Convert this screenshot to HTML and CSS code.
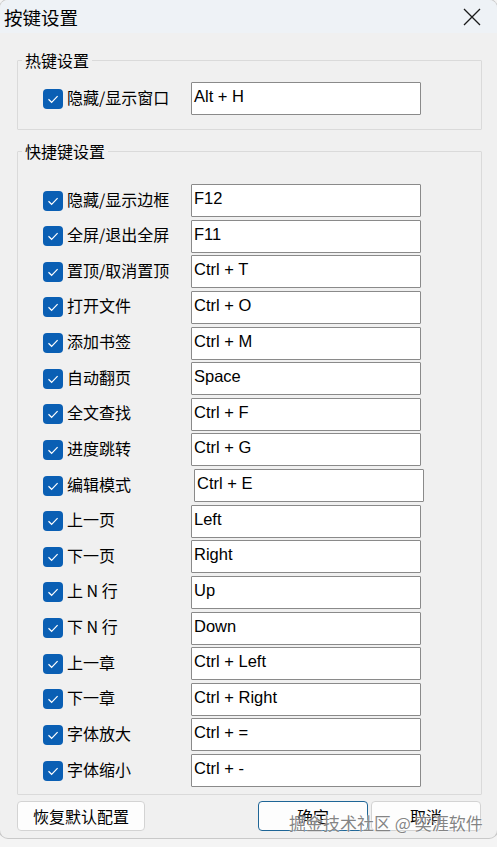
FILE: index.html
```html
<!DOCTYPE html>
<html lang="zh">
<head>
<meta charset="utf-8">
<title>按键设置</title>
<link rel="stylesheet" href="styles.css">
</head>
<body>
<div class="window">
  <div class="titlebar">
    <span class="title">按键设置</span>
    <svg class="close" width="18" height="18" viewBox="0 0 18 18"><path d="M1 1 L17 17 M17 1 L1 17" stroke="#1a1a1a" stroke-width="1.3" fill="none"/></svg>
  </div>
  <div class="content">
    <fieldset class="group group-hot">
      <legend>热键设置</legend>
      <div class="rows">
        <label class="row"><span class="chk"><svg width="20" height="20" viewBox="0 0 20 20"><path d="M5.5 10.3 L8.6 13.3 L14.6 7.2" stroke="#fff" stroke-width="1.2" fill="none"/></svg></span><span class="lbl">隐藏/显示窗口</span><span class="key">Alt + H</span></label>
      </div>
    </fieldset>
    <fieldset class="group group-short">
      <legend>快捷键设置</legend>
      <div class="rows">
        <label class="row"><span class="chk"><svg width="20" height="20" viewBox="0 0 20 20"><path d="M5.5 10.3 L8.6 13.3 L14.6 7.2" stroke="#fff" stroke-width="1.2" fill="none"/></svg></span><span class="lbl">隐藏/显示边框</span><span class="key">F12</span></label>
        <label class="row"><span class="chk"><svg width="20" height="20" viewBox="0 0 20 20"><path d="M5.5 10.3 L8.6 13.3 L14.6 7.2" stroke="#fff" stroke-width="1.2" fill="none"/></svg></span><span class="lbl">全屏/退出全屏</span><span class="key">F11</span></label>
        <label class="row"><span class="chk"><svg width="20" height="20" viewBox="0 0 20 20"><path d="M5.5 10.3 L8.6 13.3 L14.6 7.2" stroke="#fff" stroke-width="1.2" fill="none"/></svg></span><span class="lbl">置顶/取消置顶</span><span class="key">Ctrl + T</span></label>
        <label class="row"><span class="chk"><svg width="20" height="20" viewBox="0 0 20 20"><path d="M5.5 10.3 L8.6 13.3 L14.6 7.2" stroke="#fff" stroke-width="1.2" fill="none"/></svg></span><span class="lbl">打开文件</span><span class="key">Ctrl + O</span></label>
        <label class="row"><span class="chk"><svg width="20" height="20" viewBox="0 0 20 20"><path d="M5.5 10.3 L8.6 13.3 L14.6 7.2" stroke="#fff" stroke-width="1.2" fill="none"/></svg></span><span class="lbl">添加书签</span><span class="key">Ctrl + M</span></label>
        <label class="row"><span class="chk"><svg width="20" height="20" viewBox="0 0 20 20"><path d="M5.5 10.3 L8.6 13.3 L14.6 7.2" stroke="#fff" stroke-width="1.2" fill="none"/></svg></span><span class="lbl">自动翻页</span><span class="key">Space</span></label>
        <label class="row"><span class="chk"><svg width="20" height="20" viewBox="0 0 20 20"><path d="M5.5 10.3 L8.6 13.3 L14.6 7.2" stroke="#fff" stroke-width="1.2" fill="none"/></svg></span><span class="lbl">全文查找</span><span class="key">Ctrl + F</span></label>
        <label class="row"><span class="chk"><svg width="20" height="20" viewBox="0 0 20 20"><path d="M5.5 10.3 L8.6 13.3 L14.6 7.2" stroke="#fff" stroke-width="1.2" fill="none"/></svg></span><span class="lbl">进度跳转</span><span class="key">Ctrl + G</span></label>
        <label class="row"><span class="chk"><svg width="20" height="20" viewBox="0 0 20 20"><path d="M5.5 10.3 L8.6 13.3 L14.6 7.2" stroke="#fff" stroke-width="1.2" fill="none"/></svg></span><span class="lbl">编辑模式</span><span class="key key-shift">Ctrl + E</span></label>
        <label class="row"><span class="chk"><svg width="20" height="20" viewBox="0 0 20 20"><path d="M5.5 10.3 L8.6 13.3 L14.6 7.2" stroke="#fff" stroke-width="1.2" fill="none"/></svg></span><span class="lbl">上一页</span><span class="key">Left</span></label>
        <label class="row"><span class="chk"><svg width="20" height="20" viewBox="0 0 20 20"><path d="M5.5 10.3 L8.6 13.3 L14.6 7.2" stroke="#fff" stroke-width="1.2" fill="none"/></svg></span><span class="lbl">下一页</span><span class="key">Right</span></label>
        <label class="row"><span class="chk"><svg width="20" height="20" viewBox="0 0 20 20"><path d="M5.5 10.3 L8.6 13.3 L14.6 7.2" stroke="#fff" stroke-width="1.2" fill="none"/></svg></span><span class="lbl">上 N 行</span><span class="key">Up</span></label>
        <label class="row"><span class="chk"><svg width="20" height="20" viewBox="0 0 20 20"><path d="M5.5 10.3 L8.6 13.3 L14.6 7.2" stroke="#fff" stroke-width="1.2" fill="none"/></svg></span><span class="lbl">下 N 行</span><span class="key">Down</span></label>
        <label class="row"><span class="chk"><svg width="20" height="20" viewBox="0 0 20 20"><path d="M5.5 10.3 L8.6 13.3 L14.6 7.2" stroke="#fff" stroke-width="1.2" fill="none"/></svg></span><span class="lbl">上一章</span><span class="key">Ctrl + Left</span></label>
        <label class="row"><span class="chk"><svg width="20" height="20" viewBox="0 0 20 20"><path d="M5.5 10.3 L8.6 13.3 L14.6 7.2" stroke="#fff" stroke-width="1.2" fill="none"/></svg></span><span class="lbl">下一章</span><span class="key">Ctrl + Right</span></label>
        <label class="row"><span class="chk"><svg width="20" height="20" viewBox="0 0 20 20"><path d="M5.5 10.3 L8.6 13.3 L14.6 7.2" stroke="#fff" stroke-width="1.2" fill="none"/></svg></span><span class="lbl">字体放大</span><span class="key">Ctrl + =</span></label>
        <label class="row"><span class="chk"><svg width="20" height="20" viewBox="0 0 20 20"><path d="M5.5 10.3 L8.6 13.3 L14.6 7.2" stroke="#fff" stroke-width="1.2" fill="none"/></svg></span><span class="lbl">字体缩小</span><span class="key">Ctrl + -</span></label>
      </div>
    </fieldset>
    <div class="buttons">
      <button class="btn btn-reset">恢复默认配置</button>
      <span class="spacer"></span>
      <button class="btn btn-ok">确定</button>
      <button class="btn">取消</button>
      <span class="watermark">掘金技术社区 @ 奕涯软件</span>
    </div>
  </div>
</div>
</body>
</html>
```

FILE: styles.css
```css
html, body {
  margin: 0;
  padding: 0;
}
body {
  width: 497px;
  height: 847px;
  background: #f4f4f4;
  font-family: "Noto Sans CJK SC", "Liberation Sans", sans-serif;
  color: #000;
  overflow: hidden;
}
.window {
  height: 838px;
  background: #f0f0f0;
  border-radius: 8px;
  box-shadow: 0 0 0 1px #c9c9c9;
  overflow: hidden;
}
.titlebar {
  height: 33px;
  background: #eef2f6;
  display: flex;
  align-items: center;
  justify-content: space-between;
  padding: 0 16px 0 4px;
}
.title {
  font-size: 18.5px;
  line-height: 22px;
}
.close {
  display: block;
  margin-top: 1px;
}
.content {
  padding: 0 15px 0 17px;
}
.group {
  margin: 0;
  padding: 0;
  border: 1px solid #dadada;
  border-radius: 1px;
}
.group legend {
  font-size: 16px;
  line-height: 18px;
  padding: 0 3px;
  margin-left: -21px;
}
.group-hot {
  margin-top: 18px;
  padding: 13px 0 14px 25px;
}
.group-short {
  margin-top: 12px;
  padding: 24px 0 7px 25px;
}
.rows {
  display: flex;
  flex-direction: column;
  gap: 2.625px;
}
.row {
  display: flex;
  align-items: center;
  height: 33px;
}
.chk {
  width: 20px;
  height: 20px;
  border-radius: 4px;
  background: #0a5fb4;
  display: block;
  flex: none;
}
.chk svg {
  display: block;
}
.lbl {
  width: 124px;
  margin-left: 4px;
  padding-bottom: 4px;
  font-size: 16px;
  line-height: 20px;
  white-space: nowrap;
}
.key {
  box-sizing: border-box;
  width: 230px;
  height: 33px;
  background: #fff;
  border: 1px solid #8a8a8a;
  border-radius: 1px;
  padding: 3px 2px 0;
  font-family: "Liberation Sans", "DejaVu Sans", sans-serif;
  font-size: 16.5px;
  line-height: 20px;
}
.key-shift {
  margin-left: 3px;
}
.buttons {
  position: relative;
  display: flex;
  align-items: center;
  gap: 3px;
  margin-top: 6px;
  padding-right: 1px;
}
.spacer {
  flex: 1;
}
.btn {
  box-sizing: border-box;
  height: 30px;
  width: 110px;
  background: #fdfdfd;
  border: 1px solid #d3d3d3;
  border-radius: 4px;
  font-family: "Noto Sans CJK SC", sans-serif;
  font-size: 16px;
  line-height: 18px;
  color: #000;
  padding: 0;
}
.btn-reset {
  width: 128px;
}
.btn-ok {
  border: 1px solid #1e6596;
}
.watermark {
  position: absolute;
  left: 272px;
  top: 12px;
  font-size: 17px;
  line-height: 20px;
  color: rgba(110, 110, 110, 0.85);
  text-shadow: 0 0 2px #fff, 0 0 1px #fff;
  white-space: nowrap;
  pointer-events: none;
}
```
